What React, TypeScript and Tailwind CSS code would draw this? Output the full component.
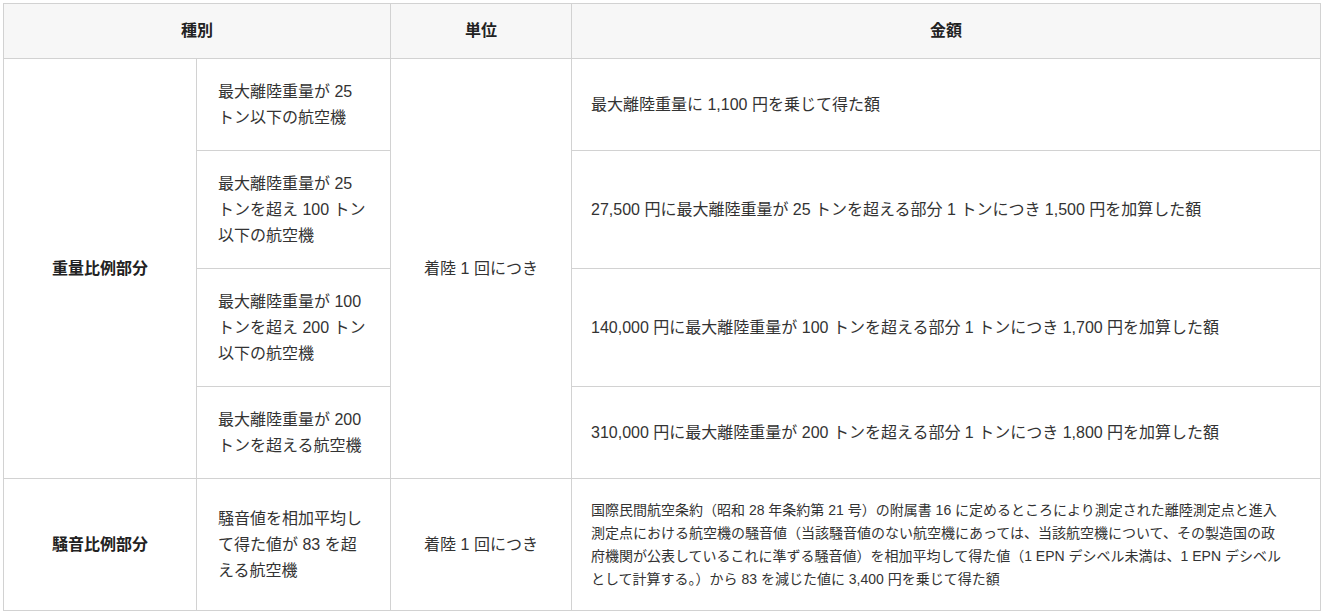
const font = { fontFamily: '"Liberation Sans", "Noto Sans CJK JP", sans-serif' };

const weightRows = [
  {
    kind: ["最大離陸重量が 25", "トン以下の航空機"],
    amount: "最大離陸重量に 1,100 円を乗じて得た額",
  },
  {
    kind: ["最大離陸重量が 25", "トンを超え 100 トン", "以下の航空機"],
    amount: "27,500 円に最大離陸重量が 25 トンを超える部分 1 トンにつき 1,500 円を加算した額",
  },
  {
    kind: ["最大離陸重量が 100", "トンを超え 200 トン", "以下の航空機"],
    amount: "140,000 円に最大離陸重量が 100 トンを超える部分 1 トンにつき 1,700 円を加算した額",
  },
  {
    kind: ["最大離陸重量が 200", "トンを超える航空機"],
    amount: "310,000 円に最大離陸重量が 200 トンを超える部分 1 トンにつき 1,800 円を加算した額",
  },
];

const noiseAmount = [
  "国際民間航空条約（昭和 28 年条約第 21 号）の附属書 16 に定めるところにより測定された離陸測定点と進入",
  "測定点における航空機の騒音値（当該騒音値のない航空機にあっては、当該航空機について、その製造国の政",
  "府機関が公表しているこれに準ずる騒音値）を相加平均して得た値（1 EPN デシベル未満は、1 EPN デシベル",
  "として計算する。）から 83 を減じた値に 3,400 円を乗じて得た額",
];

function Lines({ lines }: { lines: string[] }) {
  return (
    <>
      {lines.map((l, i) => (
        <span key={i} className="block whitespace-nowrap">
          {l}
        </span>
      ))}
    </>
  );
}

const cell = "border border-[#d2d2d2] align-middle";

export default function App() {
  return (
    <div className="bg-white p-[3px] text-[#333]" style={font}>
      <table className="w-full table-fixed border-collapse text-[16px] leading-[26px]">
        <colgroup>
          <col className="w-[193px]" />
          <col className="w-[194px]" />
          <col className="w-[181px]" />
          <col />
        </colgroup>
        <thead>
          <tr className="bg-[#f7f7f7]">
            <th colSpan={2} className={`${cell} py-[14px] text-center font-bold text-[#222]`}>
              種別
            </th>
            <th className={`${cell} py-[14px] text-center font-bold text-[#222]`}>単位</th>
            <th className={`${cell} py-[14px] text-center font-bold text-[#222]`}>金額</th>
          </tr>
        </thead>
        <tbody>
          {weightRows.map((r, i) => (
            <tr key={i}>
              {i === 0 && (
                <td rowSpan={4} className={`${cell} text-center font-bold text-[#222]`}>
                  重量比例部分
                </td>
              )}
              <td className={`${cell} py-[19.5px] pl-[21px] pr-[12px]`}>
                <Lines lines={r.kind} />
              </td>
              {i === 0 && (
                <td rowSpan={4} className={`${cell} text-center`}>
                  着陸 1 回につき
                </td>
              )}
              <td className={`${cell} py-[19.5px] px-[19px]`}>{r.amount}</td>
            </tr>
          ))}
          <tr>
            <td className={`${cell} text-center font-bold text-[#222]`}>騒音比例部分</td>
            <td className={`${cell} py-[19.5px] pl-[21px] pr-[12px]`}>
              <Lines lines={["騒音値を相加平均し", "て得た値が 83 を超", "える航空機"]} />
            </td>
            <td className={`${cell} text-center`}>着陸 1 回につき</td>
            <td className={`${cell} py-[19.5px] px-[19px] text-[14px] leading-[23px]`}>
              <Lines lines={noiseAmount} />
            </td>
          </tr>
        </tbody>
      </table>
    </div>
  );
}
